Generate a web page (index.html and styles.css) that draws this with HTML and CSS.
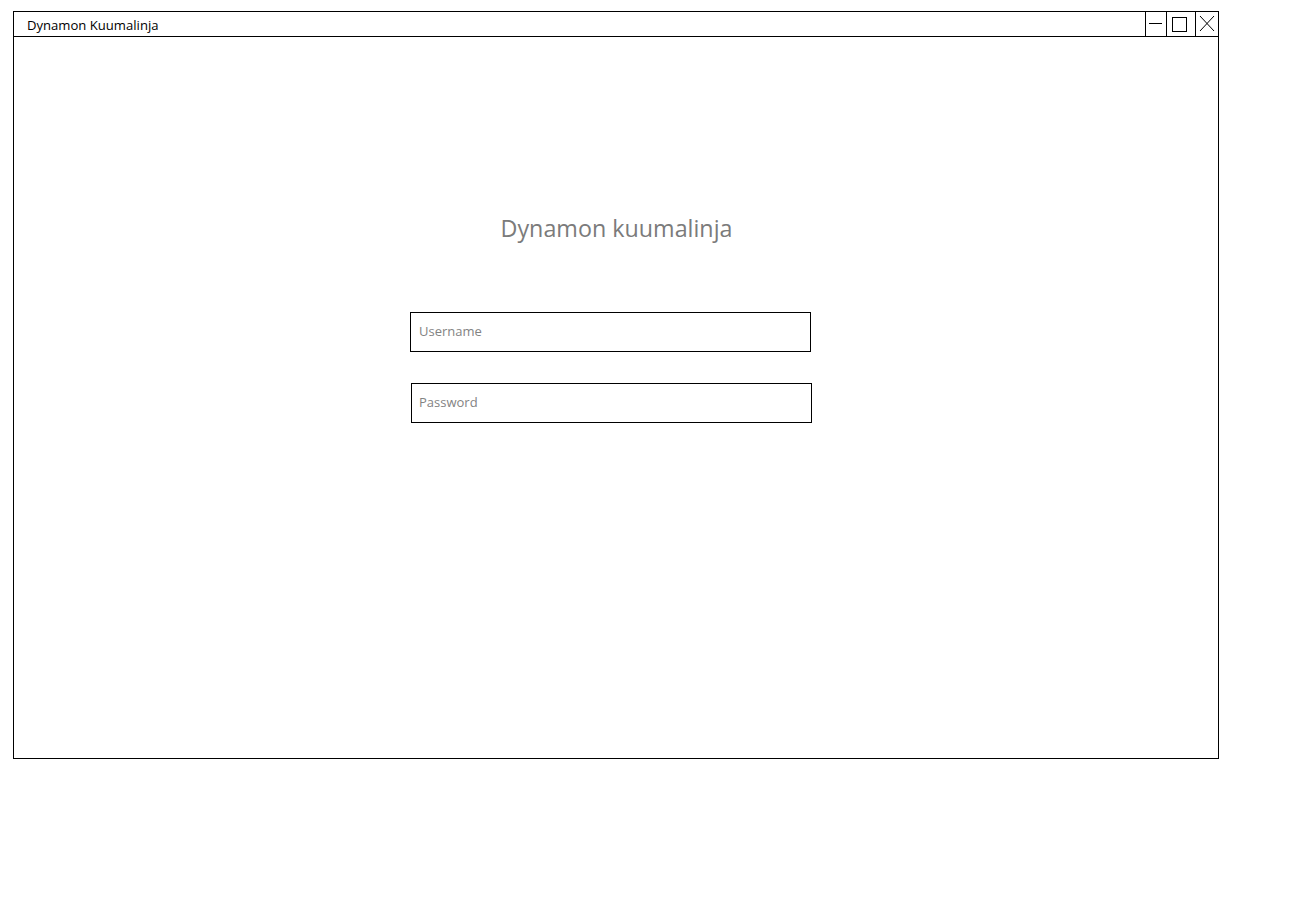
FILE: index.html
```html
<!DOCTYPE html>
<html lang="fi">
<head>
<meta charset="utf-8">
<title>Dynamon Kuumalinja</title>
<link rel="stylesheet" href="styles.css">
</head>
<body>
<div class="window">
  <div class="titlebar">
    <span class="title">Dynamon Kuumalinja</span>
    <div class="controls">
      <div class="btn btn-min">
        <svg width="20" height="24" viewBox="0 0 20 24"><line x1="3" y1="11.5" x2="16" y2="11.5" stroke="#000" stroke-width="1"/></svg>
      </div>
      <div class="btn btn-max">
        <svg width="28" height="24" viewBox="0 0 28 24"><rect x="5.5" y="5.5" width="14" height="14" fill="none" stroke="#000" stroke-width="1"/></svg>
      </div>
      <div class="btn btn-close">
        <svg width="22" height="24" viewBox="0 0 22 24"><path d="M4 4 L18 19 M18 4 L4 19" stroke="#000" stroke-width="1" fill="none"/></svg>
      </div>
    </div>
  </div>
  <div class="content">
    <h1 class="heading">Dynamon kuumalinja</h1>
    <form class="login">
      <input class="field field-user" type="text" placeholder="Username">
      <input class="field field-pass" type="password" placeholder="Password">
    </form>
  </div>
</div>
</body>
</html>
```

FILE: styles.css
```css
html, body {
  margin: 0;
  padding: 0;
  background: #fff;
}

body {
  font-family: "Open Sans", "Noto Sans", sans-serif;
}

.window {
  box-sizing: border-box;
  margin: 11px 0 0 13px;
  width: 1206px;
  height: 748px;
  border: 1px solid #000;
  display: flex;
  flex-direction: column;
}

.titlebar {
  display: flex;
  align-items: stretch;
  height: 24px;
  border-bottom: 1px solid #000;
}

.title {
  padding-left: 13px;
  font-size: 13.1px;
  line-height: 26px;
  color: #000;
}

.controls {
  margin-left: auto;
  display: flex;
}

.btn {
  border-left: 1px solid #000;
  height: 24px;
}

.btn svg {
  display: block;
}

.btn-min { width: 20px; }
.btn-max { width: 28px; }
.btn-close { width: 22px; }

.content {
  flex: 1;
  display: flex;
  flex-direction: column;
  padding-top: 175px;
}

.heading {
  margin: 0;
  text-align: center;
  font-weight: 400;
  font-size: 23.3px;
  line-height: 32px;
  color: #7b7b7b;
  padding-left: 1px;
}

.login {
  margin: 68px 0 0 396px;
  display: flex;
  flex-direction: column;
  gap: 31px;
}

.field {
  box-sizing: border-box;
  width: 401px;
  height: 40px;
  margin: 0;
  border: 1px solid #000;
  border-radius: 0;
  padding: 0 8px 2px;
  font-family: "Open Sans", "Noto Sans", sans-serif;
  font-size: 13px;
  color: #333;
  background: #fff;
  outline: none;
}

.field::placeholder {
  color: #838383;
  opacity: 1;
}

.field-pass {
  margin-left: 1px;
  padding-left: 7px;
}
```
